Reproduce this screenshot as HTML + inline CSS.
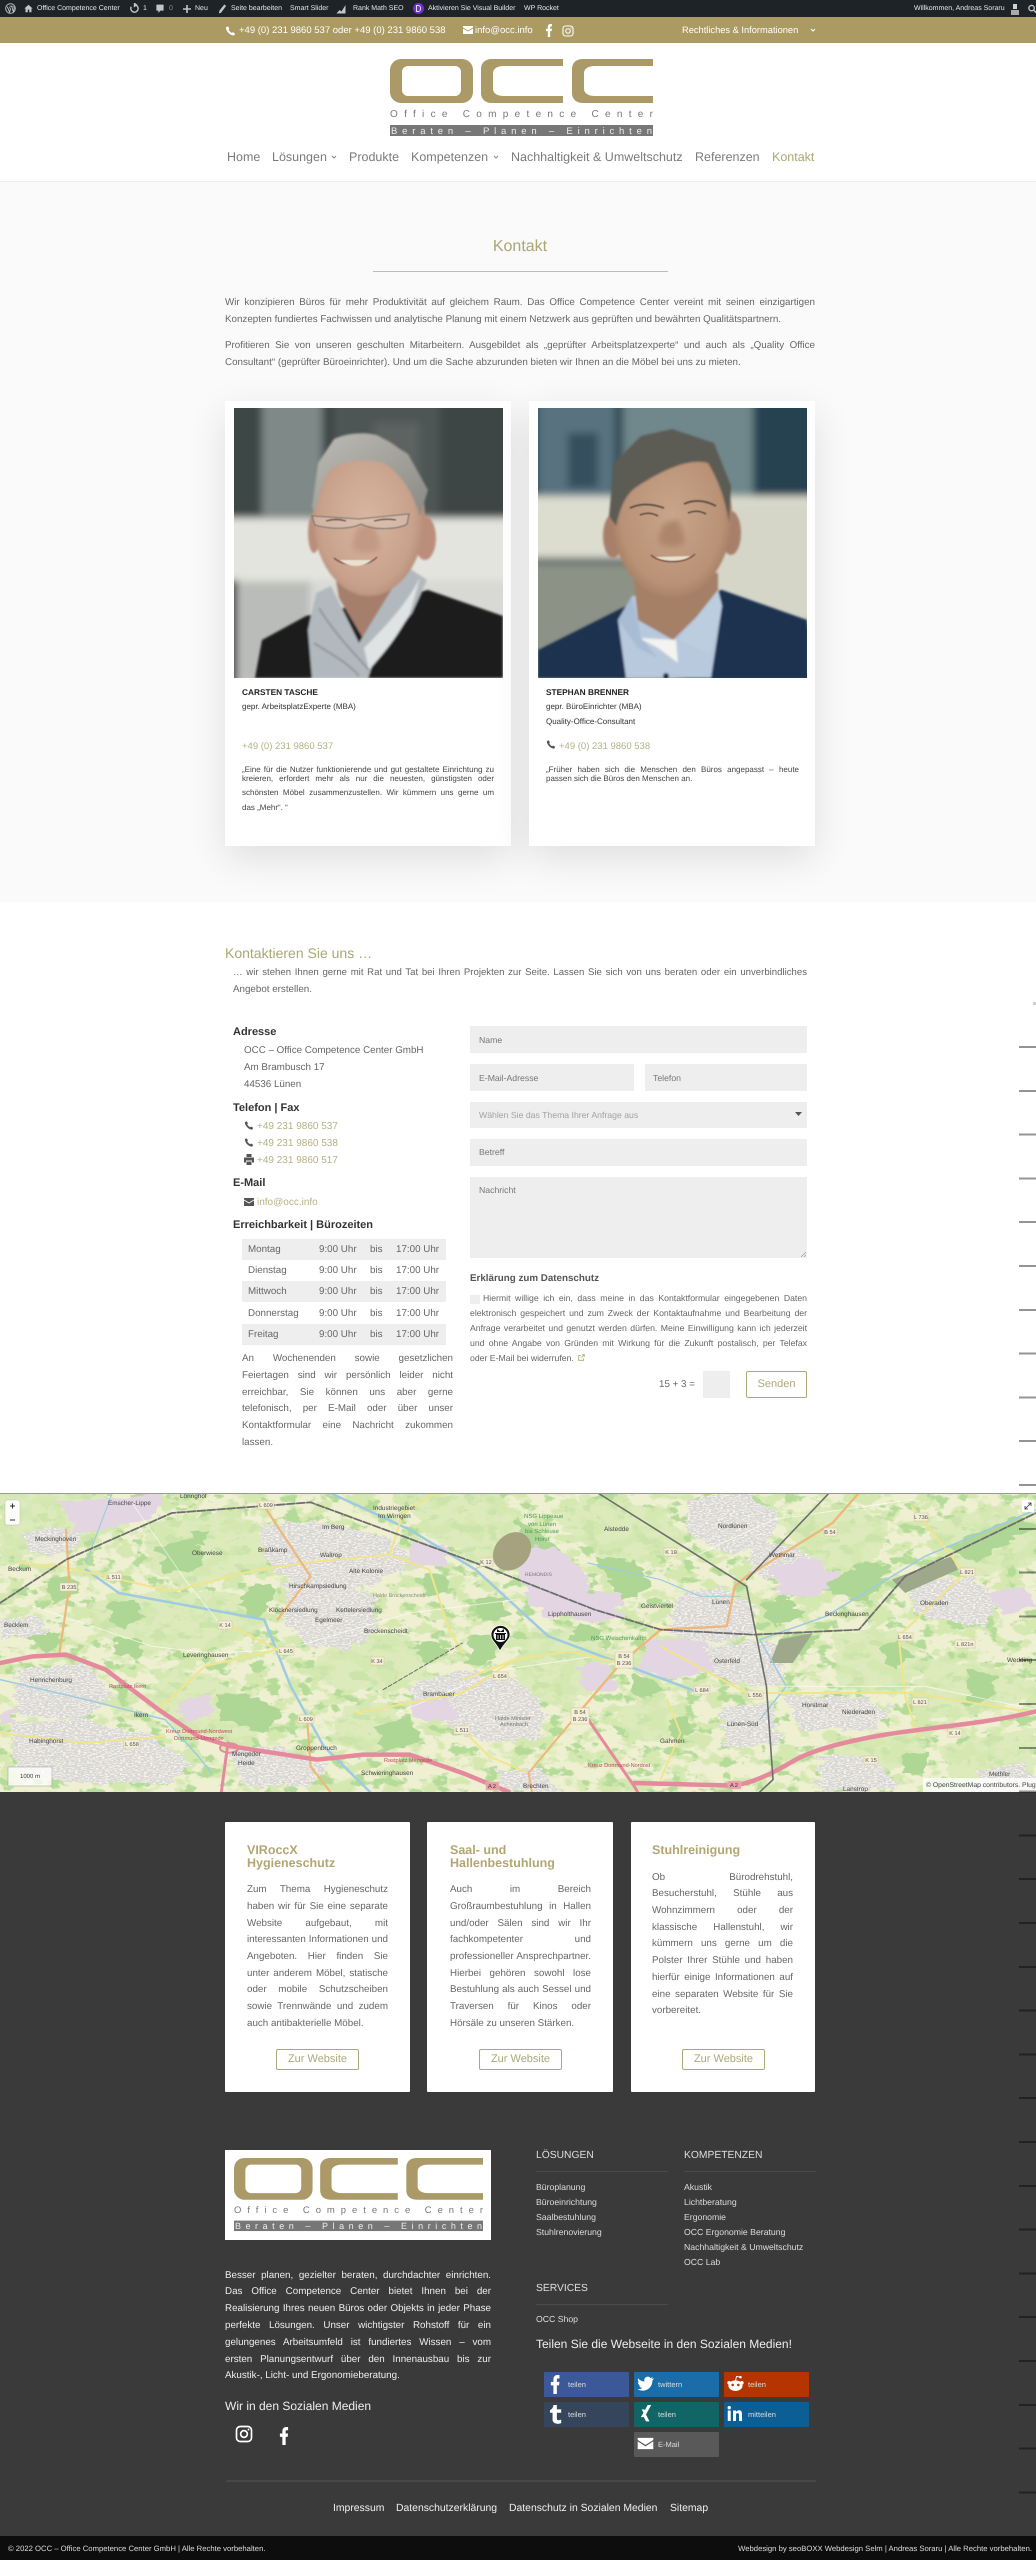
<!DOCTYPE html>
<html lang="de"><head><meta charset="utf-8"><title>Kontakt - OCC</title>
<style>
html,body{margin:0;padding:0}
body{position:relative;width:1036px;height:2560px;overflow:hidden;background:#fff;font-family:"Liberation Sans",Arial,sans-serif;color:#666;font-size:10px;text-rendering:geometricPrecision}
.a{position:absolute}
.t{position:absolute;white-space:nowrap;line-height:14px;margin-top:1px}
.j{position:absolute;line-height:14px;text-align:justify;text-align-last:justify;margin-top:1px}
svg{display:block}
svg.a{position:absolute}
.ad{color:#e8e8e8;font-size:7px;margin-top:0}
.gb{color:#fff;font-size:9.5px;margin-top:0}
.nav{font-size:12.5px;color:#7b7b7b;margin-top:0}
.f{background:#eee;position:absolute}
.ph{color:#777;font-size:8.7px;margin-top:0}
.g{color:#b3b285;margin-top:2px}
.h{font-weight:bold;color:#333;font-size:11px}
.p{color:#666;font-size:9.8px}
.q{color:#444;font-size:8px}
.ct{font-weight:bold;color:#b3a673;font-size:12.5px}
.btn{position:absolute;border:1px solid #aaa97c;border-radius:2px;color:#aaa97c;text-align:center;font-size:11px;box-sizing:border-box}
.card{position:absolute;background:#fff;top:1822px;height:270px;border-radius:1px}
.w{color:#eee;font-size:9.8px}
.fl{color:#ddd;font-size:8.7px}
.fh{color:#ddd;font-size:10.3px}
.ln{position:absolute;height:1px;background:#4b4b4b}
.s{position:absolute;height:25px;width:85px;border-radius:1px;color:#ddd;font-size:7.5px;line-height:25px}
.s span{position:absolute;left:24px;top:0}
.s svg{position:absolute;left:3px;top:3px}
.row{position:absolute;left:242px;width:204px;height:21px;background:#eee}
.ms{font-size:6.4px;fill:#444;font-family:"Liberation Sans",sans-serif}
.mg{font-size:6px;fill:#4a9a55;font-family:"Liberation Sans",sans-serif}
.mr{font-size:5.6px;fill:#b8505e;font-family:"Liberation Sans",sans-serif}
.mb{font-size:5.6px;fill:#555;font-family:"Liberation Sans",sans-serif;text-anchor:middle}
.bd{fill:#f6efd8;stroke:#d8c9a0;stroke-width:.6}
</style></head><body>

<!-- admin bar -->
<div class="a" style="left:0;top:0;width:1036px;height:17px;background:#1d2327"></div>
<svg class="a" style="left:5px;top:3px" width="11" height="11" viewBox="0 0 24 24"><circle cx="12" cy="12" r="10.500" fill="none" stroke="#c3c6c9" stroke-width="2"/><path d="M5 8l5 12 2-6-2-5M10 7h7M15 8l3 11 2-7c.5-2-1-3-1-5" fill="none" stroke="#c3c6c9" stroke-width="2"/></svg>
<svg class="a" style="left:24px;top:4px" width="9" height="9" viewBox="0 0 24 24"><path d="M12 2 1 12h3v10h6v-7h4v7h6V12h3z" fill="#c3c6c9"/></svg>
<div class="t ad" style="left:37px;top:2px">Office Competence Center</div>
<svg class="a" style="left:129px;top:3px" width="11" height="11" viewBox="0 0 24 24"><path d="M12 4a8 8 0 1 1-7 4M12 1v6l4-3z" fill="none" stroke="#c3c6c9" stroke-width="3"/></svg>
<div class="t ad" style="left:143px;top:2px">1</div>
<svg class="a" style="left:156px;top:4px" width="8" height="10" viewBox="0 0 20 24"><path d="M1 1h18v15h-8l-5 6v-6H1z" fill="#c3c6c9"/></svg>
<div class="t ad" style="left:169px;top:2px;color:#888">0</div>
<svg class="a" style="left:183px;top:5px" width="8" height="8" viewBox="0 0 10 10"><path d="M4 0h2v4h4v2H6v4H4V6H0V4h4z" fill="#c3c6c9"/></svg>
<div class="t ad" style="left:195px;top:2px">Neu</div>
<svg class="a" style="left:218px;top:4px" width="9" height="10" viewBox="0 0 20 22"><path d="M14 1l4 3L7 19l-5 2 1-6z" fill="#c3c6c9"/></svg>
<div class="t ad" style="left:231px;top:2px">Seite bearbeiten</div>
<div class="t ad" style="left:290px;top:2px">Smart Slider</div>
<svg class="a" style="left:336px;top:4px" width="11" height="10" viewBox="0 0 22 20"><path d="M1 19l6-7 4 3 8-13v17z" fill="#c3c6c9"/></svg>
<div class="t ad" style="left:353px;top:2px">Rank Math SEO</div>
<div class="a" style="left:413px;top:3px;width:11px;height:11px;border-radius:50%;background:#6f2fd0;border:0"></div>
<div class="a" style="left:416px;top:5px;width:3px;height:5px;border:1px solid #ddd;border-radius:0 3px 3px 0"></div>
<div class="t ad" style="left:428px;top:2px">Aktivieren Sie Visual Builder</div>
<div class="t ad" style="left:524px;top:2px">WP Rocket</div>
<div class="t ad" style="left:914px;top:2px">Willkommen, Andreas Soraru</div>
<svg class="a" style="left:1010px;top:4px" width="10" height="11" viewBox="0 0 10 11"><rect x="3" y="0" width="4" height="5" fill="#d0d0d0"/><rect x="1" y="6" width="8" height="5" fill="#aaa"/></svg>
<svg class="a" style="left:1028px;top:4px" width="9" height="10" viewBox="0 0 20 20"><circle cx="8" cy="8" r="6" fill="none" stroke="#c3c6c9" stroke-width="3"/><path d="M13 13l6 6" stroke="#c3c6c9" stroke-width="3"/></svg>

<!-- gold bar -->
<div class="a" style="left:0;top:17px;width:1036px;height:26px;background:#ab9a62"></div>
<svg class="a" style="left:225px;top:25px" width="11" height="12" viewBox="0 0 24 24"><path d="M6.600 2 9.500 7 7.800 9c.9 2.600 4.200 5.900 7.200 7.200l2-1.700 5 2.900-1.400 3.600c-.4.7-1 1-2 .9C10.500 20.800 3.200 13.500 2.100 5.400 2 4.400 2.300 3.800 3 3.400z" fill="#fff"/></svg>
<div class="t gb" style="left:239px;top:24px">+49 (0) 231 9860 537 oder +49 (0) 231 9860 538</div>
<svg class="a" style="left:463px;top:26px" width="10" height="8" viewBox="0 0 20 16"><path d="M0 0h20v3L10 9 0 3zM0 5l10 6 10-6v11H0z" fill="#fff"/></svg>
<div class="t gb" style="left:475px;top:24px">info@occ.info</div>
<svg class="a" style="left:546px;top:24px" width="6" height="13" viewBox="0 0 10 22"><path d="M3 22V12H0V8h3V5c0-3 2-5 4.500-5H10v4H8C7 4 7 5 7 6v2h3l-.5 4H7v10z" fill="#fff"/></svg>
<svg class="a" style="left:562px;top:25px" width="12" height="12" viewBox="0 0 24 24"><rect x="2" y="2" width="20" height="20" rx="5" fill="none" stroke="#fff" stroke-width="2.200"/><circle cx="12" cy="12" r="4.500" fill="none" stroke="#fff" stroke-width="2.200"/><circle cx="18" cy="6" r="1.300" fill="#fff"/></svg>
<div class="t gb" style="left:682px;top:23px;font-size:9.300px">Rechtliches &amp; Informationen</div>
<svg class="a" style="left:810px;top:28px" width="6" height="5" viewBox="0 0 6 5"><path d="M1 1l2 2 2-2" fill="none" stroke="#fff"/></svg>

<!-- logo -->
<svg class="a" style="left:390px;top:59px" width="263" height="78" viewBox="0 0 263 78">
<rect x="0" y="0" width="83" height="44" rx="11" fill="#ab9a68"/><rect x="12" y="7" width="59" height="30" rx="6" fill="#fff"/>
<path d="M102 0H173V7H114c-7 0-11 3-11 7v16c0 4 4 7 11 7H173V44H102c-7 0-11-4-11-10V10c0-6 4-10 11-10z" fill="#ab9a68"/>
<path d="M193 0H263V7H205c-7 0-11 3-11 7v16c0 4 4 7 11 7H263V44H193c-7 0-11-4-11-10V10c0-6 4-10 11-10z" fill="#ab9a68"/>
<text x="0" y="58" font-size="10" fill="#777" textLength="263" font-family="Liberation Sans">Office Competence Center</text>
<rect x="0" y="66" width="263" height="11" fill="#777"/>
<text x="1" y="75" font-size="9.500" fill="#eee" textLength="261" font-family="Liberation Sans">Beraten – Planen – Einrichten</text>
</svg>

<!-- nav -->
<div class="t nav" style="left:227px;top:150px">Home</div>
<div class="t nav" style="left:272px;top:150px">Lösungen</div>
<svg class="a" style="left:331px;top:155px" width="6" height="5" viewBox="0 0 6 5"><path d="M1 1l2 2 2-2" fill="none" stroke="#888"/></svg>
<div class="t nav" style="left:349px;top:150px">Produkte</div>
<div class="t nav" style="left:411px;top:150px">Kompetenzen</div>
<svg class="a" style="left:493px;top:155px" width="6" height="5" viewBox="0 0 6 5"><path d="M1 1l2 2 2-2" fill="none" stroke="#888"/></svg>
<div class="t nav" style="left:511px;top:150px">Nachhaltigkeit &amp; Umweltschutz</div>
<div class="t nav" style="left:695px;top:150px">Referenzen</div>
<div class="t nav" style="left:772px;top:150px;color:#a9a875">Kontakt</div>

<!-- section 1 -->
<div class="a" style="left:0;top:181px;width:1036px;height:721px;background:#fafafa;border-top:1px solid #eee;box-sizing:border-box"></div>
<div class="t" style="left:420px;width:200px;text-align:center;top:238px;font-size:16px;line-height:16px;color:#a9a875">Kontakt</div>
<div class="a" style="left:373px;top:271px;width:295px;height:1px;background:#bbb"></div>
<div class="j p" style="left:225px;top:295px;width:590px">Wir konzipieren Büros für mehr Produktivität auf gleichem Raum. Das Office Competence Center vereint mit seinen einzigartigen</div>
<div class="t p" style="left:225px;top:312px">Konzepten fundiertes Fachwissen und analytische Planung mit einem Netzwerk aus geprüften und bewährten Qualitätspartnern.</div>
<div class="j p" style="left:225px;top:338px;width:590px">Profitieren Sie von unseren geschulten Mitarbeitern. Ausgebildet als „geprüfter Arbeitsplatzexperte“ und auch als „Quality Office</div>
<div class="t p" style="left:225px;top:355px">Consultant“ (geprüfter Büroeinrichter). Und um die Sache abzurunden bieten wir Ihnen an die Möbel bei uns zu mieten.</div>

<!-- team cards -->
<div class="a" style="left:225px;top:401px;width:286px;height:445px;background:#fff;box-shadow:0 12px 36px rgba(0,0,0,.11)"></div>
<div class="a" style="left:529px;top:401px;width:286px;height:445px;background:#fff;box-shadow:0 12px 36px rgba(0,0,0,.11)"></div>

<svg class="a" style="left:234px;top:408px" width="269" height="270" viewBox="0 0 269 270">
<defs><filter id="b1" x="-10%" y="-10%" width="120%" height="120%"><feGaussianBlur stdDeviation="4"/></filter><filter id="b2" x="-10%" y="-10%" width="120%" height="120%"><feGaussianBlur stdDeviation="1"/></filter><filter id="b3" x="-30%" y="-30%" width="160%" height="160%"><feGaussianBlur stdDeviation="3"/></filter><filter id="b4" x="-20%" y="-60%" width="140%" height="220%"><feGaussianBlur stdDeviation=".6"/></filter>
<clipPath id="cp1"><rect width="269" height="270"/></clipPath>
<radialGradient id="sk1" cx=".48" cy=".52" r=".6"><stop offset="0" stop-color="#d8b6a0"/><stop offset=".7" stop-color="#c8a18b"/><stop offset="1" stop-color="#a67f6c"/></radialGradient>
<radialGradient id="sk2" cx=".5" cy=".5" r=".6"><stop offset="0" stop-color="#c9a58a"/><stop offset=".7" stop-color="#b99276"/><stop offset="1" stop-color="#946e57"/></radialGradient>
<linearGradient id="hr1" x1="0" y1="0" x2="1" y2="1"><stop offset="0" stop-color="#bcbbb4"/><stop offset="1" stop-color="#8a8983"/></linearGradient>
</defs>
<g clip-path="url(#cp1)">
<g filter="url(#b1)">
<rect x="-10" y="-10" width="290" height="290" fill="#3e4644"/>
<rect x="28" y="-10" width="60" height="118" fill="#7f8a88"/>
<rect x="100" y="-10" width="105" height="118" fill="#4d5654"/>
<rect x="140" y="15" width="45" height="80" fill="#5c6460"/>
<rect x="215" y="-10" width="60" height="118" fill="#3d4544"/>
<rect x="-10" y="110" width="290" height="62" fill="#e4e4df"/>
<rect x="-10" y="172" width="290" height="110" fill="#d8d9d5"/>
<rect x="6" y="174" width="70" height="100" fill="#b9bcb8"/>
<rect x="-10" y="172" width="14" height="110" fill="#3a3a3a"/>
</g>
<g filter="url(#b2)">
<polygon points="21,270 28,232 72,208 194,182 269,208 269,270" fill="#1c1c1e"/>
<polygon points="100,160 172,160 172,180 130,232 105,190" fill="#a67f6c"/>
<polygon points="74,222 82,185 97,178 125,235 172,158 193,172 178,205 139,255 134,270 78,270" fill="#b2b9be"/>
<path d="M130 240 C150 220 170 200 186 170 L176 205 C160 235 145 250 135 262Z" fill="#dfe3e4"/>
<path d="M85 200 C100 225 120 245 135 262 M80 235 C95 245 115 255 125 268" stroke="#8e959a" stroke-width="2" fill="none"/>
<ellipse cx="191" cy="130" rx="11" ry="22" fill="#bb8e7c"/>
<ellipse cx="80" cy="125" rx="6" ry="20" fill="#bb8e7c"/>
<ellipse cx="135" cy="108" rx="56" ry="80" fill="url(#sk1)"/>
<path d="M78 100 L84 55 L100 31 C115 24 135 24 145 28 L174 46 L194 82 L186 108 C180 90 172 70 150 55 C130 50 105 52 95 64 C88 75 84 90 82 103Z" fill="url(#hr1)"/>
</g>
<g filter="url(#b3)">
<path d="M124 118 C120 128 116 138 120 142 C128 146 140 146 146 141 C148 136 143 126 140 116Z" fill="#c29a84"/>
</g>
<g filter="url(#b4)">
<path d="M78 108 L125 111 L175 106 L173 116 C165 121 140 123 127 116 C115 122 95 121 81 117Z" fill="#e0cdbf" fill-opacity=".45" stroke="#76716e" stroke-width="1.100"/>
<path d="M92 113 q10 -3 20 0 M140 113 q12 -3 22 -1" stroke="#5a4840" stroke-width="1.400" fill="none"/>
<path d="M100 150 C110 159 133 160 143 149" stroke="#7a4a3e" stroke-width="1.300" fill="none"/>
<path d="M106 152 C115 160 129 160 137 152Z" fill="#e9e1cf"/>
</g></g></svg>

<svg class="a" style="left:538px;top:408px" width="269" height="270" viewBox="0 0 269 270">
<g clip-path="url(#cp1)">
<g filter="url(#b1)">
<rect x="-10" y="-10" width="290" height="290" fill="#2a4250"/>
<rect x="0" y="-10" width="77" height="100" fill="#587280"/>
<rect x="30" y="25" width="30" height="55" fill="#34505e"/>
<rect x="85" y="-10" width="130" height="100" fill="#6f878c"/>
<rect x="215" y="-10" width="60" height="104" fill="#264251"/>
<rect x="-10" y="88" width="290" height="62" fill="#dcdccf"/>
<rect x="130" y="95" width="150" height="120" fill="#d5d6c8"/>
<rect x="-10" y="155" width="150" height="120" fill="#8d9286"/>
</g>
<g filter="url(#b2)">
<polygon points="0,242 88,198 184,182 269,212 269,270 0,270" fill="#1b3350"/>
<polygon points="80,212 94,188 180,182 184,198 173,270 88,270" fill="#b8c9dd"/>
<polygon points="95,165 180,165 180,188 135,232 100,212" fill="#a57f66"/>
<polygon points="101,230 138,232 140,255 120,240" fill="#f3f3f0"/>
<path d="M80 212 L94 188 L103 230 L120 250 L100 240Z" fill="#a8bcd4"/>
<path d="M180 182 L184 198 L172 245 L140 232Z" fill="#bccde0"/>
<circle cx="128" cy="268" r="3" fill="#1b2b40"/>
<ellipse cx="75" cy="128" rx="10" ry="22" fill="#a8806a"/>
<ellipse cx="193" cy="125" rx="10" ry="22" fill="#a8806a"/>
<ellipse cx="134" cy="108" rx="60" ry="82" fill="url(#sk2)"/>
<path d="M71 108 L76 55 L103 28 L134 21 L176 35 L193 78 L191 115 C188 95 182 75 170 55 C150 50 125 62 100 78 C88 85 82 100 78 118Z" fill="#5c5c55"/>
</g>
<g filter="url(#b3)">
<path d="M126 115 C122 125 118 132 122 136 C130 140 142 140 146 135 C148 130 144 122 140 112Z" fill="#ad866b"/>
</g>
<g filter="url(#b4)">
<path d="M92 100 q15 -7 34 0 M146 96 q15 -7 32 2" stroke="#5e5044" stroke-width="1.800" fill="none"/>
<path d="M102 107 q9 -4 18 1 M150 105 q9 -4 18 1" stroke="#4a3c32" stroke-width="1.300" fill="none"/>
<path d="M113 147 C122 156 148 156 157 146" stroke="#744a3a" stroke-width="1.300" fill="none"/>
<path d="M118 149 C126 154 146 154 152 148Z" fill="#e8e0ce"/>
</g></g></svg>

<div class="t" style="left:242px;top:684px;font-weight:bold;font-size:8.300px;color:#222">CARSTEN TASCHE</div>
<div class="t q" style="left:242px;top:699px;color:#333">gepr. ArbeitsplatzExperte (MBA)</div>
<div class="t g" style="left:242px;top:738px;font-size:9.500px">+49 (0) 231 9860 537</div>
<div class="j q" style="left:242px;top:762px;width:252px">„Eine für die Nutzer funktionierende und gut gestaltete Einrichtung zu</div>
<div class="j q" style="left:242px;top:771px;width:252px">kreieren, erfordert mehr als nur die neuesten, günstigsten oder</div>
<div class="j q" style="left:242px;top:785px;width:252px">schönsten Möbel zusammenzustellen. Wir kümmern uns gerne um</div>
<div class="t q" style="left:242px;top:800px">das „Mehr“. “</div>

<div class="t" style="left:546px;top:684px;font-weight:bold;font-size:8.300px;color:#222">STEPHAN BRENNER</div>
<div class="t q" style="left:546px;top:699px;color:#333">gepr. BüroEinrichter (MBA)</div>
<div class="t q" style="left:546px;top:714px;color:#333">Quality-Office-Consultant</div>
<svg class="a" style="left:546px;top:739px" width="10" height="11" viewBox="0 0 24 24"><path d="M6.600 2 9.500 7 7.800 9c.9 2.600 4.200 5.900 7.200 7.200l2-1.700 5 2.900-1.400 3.600c-.4.7-1 1-2 .9C10.500 20.800 3.200 13.500 2.100 5.400 2 4.400 2.300 3.800 3 3.400z" fill="#555"/></svg>
<div class="t g" style="left:559px;top:738px;font-size:9.500px">+49 (0) 231 9860 538</div>
<div class="j q" style="left:546px;top:762px;width:253px">„Früher haben sich die Menschen den Büros angepasst – heute</div>
<div class="t q" style="left:546px;top:771px">passen sich die Büros den Menschen an.</div>

<!-- contact -->
<div class="t" style="left:225px;top:945px;font-size:14px;color:#a9a875">Kontaktieren Sie uns …</div>
<div class="j p" style="left:233px;top:965px;width:574px;font-size:9.600px">… wir stehen Ihnen gerne mit Rat und Tat bei Ihren Projekten zur Seite. Lassen Sie sich von uns beraten oder ein unverbindliches</div>
<div class="t p" style="left:233px;top:982px">Angebot erstellen.</div>

<div class="t h" style="left:233px;top:1024px">Adresse</div>
<div class="t p" style="left:244px;top:1043px">OCC – Office Competence Center GmbH</div>
<div class="t p" style="left:244px;top:1060px">Am Brambusch 17</div>
<div class="t p" style="left:244px;top:1077px">44536 Lünen</div>
<div class="t h" style="left:233px;top:1100px">Telefon | Fax</div>
<svg class="a" style="left:244px;top:1120px" width="10" height="11" viewBox="0 0 24 24"><path d="M6.600 2 9.500 7 7.800 9c.9 2.600 4.200 5.900 7.200 7.200l2-1.700 5 2.900-1.400 3.600c-.4.7-1 1-2 .9C10.500 20.800 3.200 13.500 2.100 5.400 2 4.400 2.300 3.800 3 3.400z" fill="#555"/></svg>
<div class="t g" style="left:257px;top:1118px">+49 231 9860 537</div>
<svg class="a" style="left:244px;top:1137px" width="10" height="11" viewBox="0 0 24 24"><path d="M6.600 2 9.500 7 7.800 9c.9 2.600 4.200 5.900 7.200 7.200l2-1.700 5 2.900-1.400 3.600c-.4.7-1 1-2 .9C10.500 20.800 3.200 13.500 2.100 5.400 2 4.400 2.300 3.800 3 3.400z" fill="#555"/></svg>
<div class="t g" style="left:257px;top:1135px">+49 231 9860 538</div>
<svg class="a" style="left:244px;top:1154px" width="10" height="11" viewBox="0 0 20 22"><path d="M5 0h10v6H5zM0 7h20v10h-4v-4H4v4H0zM5 15h10v7H5z" fill="#555"/></svg>
<div class="t g" style="left:257px;top:1152px">+49 231 9860 517</div>
<div class="t h" style="left:233px;top:1175px">E-Mail</div>
<svg class="a" style="left:244px;top:1198px" width="10" height="8" viewBox="0 0 20 16"><path d="M0 0h20v3L10 9 0 3zM0 5l10 6 10-6v11H0z" fill="#555"/></svg>
<div class="t g" style="left:257px;top:1194px">info@occ.info</div>
<div class="t h" style="left:233px;top:1217px">Erreichbarkeit | Bürozeiten</div>

<div class="row" style="top:1239px"></div><div class="row" style="top:1281px"></div><div class="row" style="top:1324px"></div>
<div class="t p" style="left:248px;top:1242px">Montag</div><div class="t p" style="left:319px;top:1242px">9:00 Uhr</div><div class="t p" style="left:370px;top:1242px">bis</div><div class="t p" style="left:396px;top:1242px">17:00 Uhr</div>
<div class="t p" style="left:248px;top:1263px">Dienstag</div><div class="t p" style="left:319px;top:1263px">9:00 Uhr</div><div class="t p" style="left:370px;top:1263px">bis</div><div class="t p" style="left:396px;top:1263px">17:00 Uhr</div>
<div class="t p" style="left:248px;top:1284px">Mittwoch</div><div class="t p" style="left:319px;top:1284px">9:00 Uhr</div><div class="t p" style="left:370px;top:1284px">bis</div><div class="t p" style="left:396px;top:1284px">17:00 Uhr</div>
<div class="t p" style="left:248px;top:1306px">Donnerstag</div><div class="t p" style="left:319px;top:1306px">9:00 Uhr</div><div class="t p" style="left:370px;top:1306px">bis</div><div class="t p" style="left:396px;top:1306px">17:00 Uhr</div>
<div class="t p" style="left:248px;top:1327px">Freitag</div><div class="t p" style="left:319px;top:1327px">9:00 Uhr</div><div class="t p" style="left:370px;top:1327px">bis</div><div class="t p" style="left:396px;top:1327px">17:00 Uhr</div>

<div class="j p" style="left:242px;top:1351px;width:211px">An Wochenenden sowie gesetzlichen</div>
<div class="j p" style="left:242px;top:1368px;width:211px">Feiertagen sind wir persönlich leider nicht</div>
<div class="j p" style="left:242px;top:1385px;width:211px">erreichbar, Sie können uns aber gerne</div>
<div class="j p" style="left:242px;top:1401px;width:211px">telefonisch, per E-Mail oder über unser</div>
<div class="j p" style="left:242px;top:1418px;width:211px">Kontaktformular eine Nachricht zukommen</div>
<div class="t p" style="left:242px;top:1435px">lassen.</div>

<div class="f" style="left:470px;top:1026px;width:337px;height:27px"></div>
<div class="t ph" style="left:479px;top:1033px">Name</div>
<div class="f" style="left:470px;top:1064px;width:164px;height:27px"></div>
<div class="t ph" style="left:479px;top:1071px">E-Mail-Adresse</div>
<div class="f" style="left:645px;top:1064px;width:162px;height:27px"></div>
<div class="t ph" style="left:653px;top:1071px">Telefon</div>
<div class="f" style="left:470px;top:1102px;width:337px;height:26px"></div>
<div class="t ph" style="left:479px;top:1108px;color:#a2a2a2">Wählen Sie das Thema Ihrer Anfrage aus</div>
<svg class="a" style="left:795px;top:1112px" width="7" height="5" viewBox="0 0 7 5"><path d="M0 0h7L3.500 4z" fill="#555"/></svg>
<div class="f" style="left:470px;top:1139px;width:337px;height:27px"></div>
<div class="t ph" style="left:479px;top:1145px">Betreff</div>
<div class="f" style="left:470px;top:1177px;width:337px;height:81px"></div>
<div class="t ph" style="left:479px;top:1183px">Nachricht</div>
<svg class="a" style="left:801px;top:1252px" width="5" height="5" viewBox="0 0 5 5"><path d="M0 5l5-5M3 5l2-2" stroke="#999" stroke-width=".7"/></svg>

<div class="t" style="left:470px;top:1271px;font-weight:bold;font-size:9.800px;color:#555">Erklärung zum Datenschutz</div>
<div class="f" style="left:470px;top:1295px;width:10px;height:9px"></div>
<div class="j ph" style="left:483px;top:1291px;width:324px;color:#666">Hiermit willige ich ein, dass meine in das Kontaktformular eingegebenen Daten</div>
<div class="j ph" style="left:470px;top:1306px;width:337px;color:#666">elektronisch gespeichert und zum Zweck der Kontaktaufnahme und Bearbeitung der</div>
<div class="j ph" style="left:470px;top:1321px;width:337px;color:#666">Anfrage verarbeitet und genutzt werden dürfen. Meine Einwilligung kann ich jederzeit</div>
<div class="j ph" style="left:470px;top:1336px;width:337px;color:#666">und ohne Angabe von Gründen mit Wirkung für die Zukunft postalisch, per Telefax</div>
<div class="t ph" style="left:470px;top:1351px;color:#666">oder E-Mail bei widerrufen.</div>
<svg class="a" style="left:578px;top:1354px" width="7" height="7" viewBox="0 0 10 10"><path d="M4 2H1v7h7V6M5 5l4-4M6 1h3v3" fill="none" stroke="#a9a875" stroke-width="1.200"/></svg>
<div class="t p" style="left:659px;top:1377px">15 + 3 =</div>
<div class="f" style="left:703px;top:1371px;width:27px;height:27px"></div>
<div class="btn" style="left:746px;top:1371px;width:61px;height:27px;line-height:25px">Senden</div>

<div class="a" style="left:1033px;top:1002px;width:3px;height:3px;background:#ccc"></div>

<!-- map -->
<svg class="a" style="left:0;top:1493px" width="1036" height="299" viewBox="0 0 1036 299">
<defs>
<filter id="mf" x="0" y="0" width="100%" height="100%" color-interpolation-filters="sRGB"><feTurbulence type="fractalNoise" baseFrequency=".045 .07" numOctaves="4" seed="7"/><feColorMatrix type="matrix" values="0 0 0 0 .83  0 0 0 0 .91  0 0 0 0 .69  9 0 0 0 -4.350"/></filter>
<filter id="mg" x="0" y="0" width="100%" height="100%" color-interpolation-filters="sRGB"><feTurbulence type="fractalNoise" baseFrequency=".06 .095" numOctaves="4" seed="23"/><feColorMatrix type="matrix" values="0 0 0 0 .71  0 0 0 0 .86  0 0 0 0 .60  10 0 0 0 -5.800"/></filter>
<filter id="dp" x="-5%" y="-5%" width="110%" height="110%"><feTurbulence type="fractalNoise" baseFrequency=".05" numOctaves="2" seed="3"/><feDisplacementMap in="SourceGraphic" scale="28" xChannelSelector="R" yChannelSelector="G"/></filter>
<filter id="st" x="-5%" y="-5%" width="110%" height="110%" color-interpolation-filters="sRGB"><feTurbulence type="fractalNoise" baseFrequency=".05" numOctaves="2" seed="9" result="a"/><feDisplacementMap in="SourceGraphic" in2="a" scale="34" xChannelSelector="R" yChannelSelector="G" result="d"/><feTurbulence type="fractalNoise" baseFrequency=".22 .3" numOctaves="2" seed="5"/><feColorMatrix type="matrix" values="0 0 0 0 .96  0 0 0 0 .95  0 0 0 0 .93  10 0 0 0 -5"/><feComposite in2="d" operator="in" result="sp"/><feMerge><feMergeNode in="d"/><feMergeNode in="sp"/></feMerge></filter>
</defs>
<rect width="1036" height="299" fill="#eff0d2"/>
<rect width="1036" height="299" filter="url(#mf)"/>
<rect width="1036" height="299" filter="url(#mg)"/>
<g transform="scale(0.6607 0.3333) translate(0 -40)">
<g fill="#d6e9b4" filter="url(#dp)" opacity=".7">
<path d="M0 40h160l40 100-100 60-100 40zM220 130l120-30 60 40 10 110-120 80-70-60zM620 40h140l30 130-60 80-90-90zM880 50l130 40 30 120-110 50-90-130zM1180 120l90-50 80 60-30 130-90 20zM1400 130l120-60 48 60v120l-90 40-60-60zM130 370l100-30 120-10 60 100-60 70-130 20-70-60zM520 450l100 20 40 130-130 40-70-60zM800 450l110 10 20 130-70 90-90-50zM1260 460l100-10 40 100-40 100-90-20zM1400 540l100 10 68 60v40l-130 80-60-60zM1000 640l40 90-40 60-50-20-20-80zM250 570l70 20 80 100-20 100-100-30-60-90zM520 680l70-20 30 100-50 60-70-30zM1270 780l110-30 30 70-90 80-60-60zM1420 800l148-60v190h-120z"/>
</g>
<g fill="#aed694" filter="url(#dp)">
<path d="M240 200l50-25 20 40-10 55-50 10zM70 300l40-20 10 60-40 30zM160 380l40-20 20 50-40 40zM385 310l30 10-10 70-25 30-15-50zM510 430l28 8-4 30-25-5zM640 290l30-10 10 50-35 20zM620 500l40-20 20 30-30 50zM710 480l30-20 20 30-20 60-30 10zM870 430l40 20-10 40-40-10zM960 580l40 30-10 40-40-10zM1150 370l40-20 30 60-50 30zM1180 470l60-10-30 70-30 10zM1330 500l30-20 20 50-30 40zM1470 570l40 20-10 70-40 20zM1100 680l25-10 10 40-30 30zM1010 720l30-10 10 50-30 20zM330 640l50 10 50 50-30 60-70-40zM40 470l30-20 30 30-30 40zM180 470l40 10-10 50-40-10zM110 720l30 10 10 60-40-20zM570 740l50-30 20 70-60 40zM780 110l30 40 40 60-60 0zM900 230l60 10 30 80-50 40zM1240 330l60-80 50 10-40 110zM1430 200l110-90 28 30-90 110zM720 360l40-10 10 60-40 20zM290 160l20-10 0 40-20 10zM1230 660l50-20 10 40-50 30zM1370 820l40 0-10 60-30 0z"/>
</g>
<g fill="#d9d7d3" filter="url(#st)">
<path d="M390 130l110 0 100 50 20 70-60 70-90 10-60-60zM430 310l70-20 70 60 0 100-40 60-60-10-40-70zM630 610l70-40 90 30 40 110-20 70-70 10-60-50-20-60-40-30zM1040 60l80-20 60 60-20 100-60 20-60-60zM1030 340l60-20 50 50 0 100-60 20-70-30zM1060 500l110-20 20 130-50 10-70-40zM1090 680l80-10 10 120-80 20zM1190 650l110 0 50 40-30 60-110 0zM1130 210l60-20 40 40-30 70-50 0zM1370 310l100-20 50 80-40 70-90-30zM20 570l110-20 40 110-50 60-90-10zM20 730l100-10 100 40 70 90-30 60-160 0-80-40zM340 810l80-10 70 60-20 60-100 0zM750 870l70 0 30 67-90 0zM40 150l60-10 30 50-50 40-40-20zM0 420l60-10 10 50-70 20zM1240 830l80 0 40 100h-120zM1480 870l70-20 18 60v30h-100z"/>
</g>
<g fill="#e3d6e2" filter="url(#dp)">
<path d="M780 210l60-10 50 90 0 50 60 70-60 20-90-60zM820 340l120 0 0 70-120 0zM980 480l80 0 20 90-70 30-50-30zM1170 260l60-30 40 60-30 60-60 0zM90 70l160-30-20 80-110 40zM620 190l50 0 10 70-60 0zM880 550l40 0 10 80-50 0zM270 670l50-30 0 60-40 30zM620 660l60 0 10 60-60 0zM1500 340l50-20 18 60-50 30zM0 700l20-20 0 50-20 10z"/>
</g>
<g fill="#a6a27f"><ellipse cx="775" cy="215" rx="28" ry="58" transform="rotate(8 775 215)"/></g>
<g fill="#9ea88a"><path d="M1180 480l50-20-30 90-35 0zM1350 300l90-70 10 40-80 70z"/></g>
<g fill="none" stroke-linecap="round" stroke-linejoin="round">
<g stroke="#9fcbe2">
<path vector-effect="non-scaling-stroke" stroke-width="2.500" d="M500 40 L620 150 L720 270 L830 470 L1060 640"/>
<path vector-effect="non-scaling-stroke" stroke-width="2.500" d="M130 270 L180 340 L400 420 L440 620 L490 800 L560 937"/>
<path vector-effect="non-scaling-stroke" stroke-width="1.500" d="M1568 90 L1400 230 L1250 410 L1150 480 L1190 620 L1150 720"/>
<path vector-effect="non-scaling-stroke" stroke-width="1.500" d="M0 600 L130 660 L250 720 L300 830 L320 880"/>
<path vector-effect="non-scaling-stroke" stroke-width="1.200" d="M890 250 L1000 300 L1060 350 L1120 350"/>
<path vector-effect="non-scaling-stroke" stroke-width="1.200" d="M170 40 L130 250"/>
</g>
<g stroke="#fff" stroke-opacity=".7">
<path vector-effect="non-scaling-stroke" stroke-width=".8" d="M50 380 L230 500 L320 520 L430 510 L620 400 L780 360 M600 700 L760 570 L900 530 M1180 620 L1400 620 L1568 690 M200 70 L280 300 L340 450 M1040 240 L1170 120 L1380 60"/>
</g>
<g stroke="#f0e48c">
<path vector-effect="non-scaling-stroke" stroke-width="2" d="M90 260 L160 290 L260 335 L390 270 L480 245 L590 225 L650 270 L680 450 L700 520"/>
<path vector-effect="non-scaling-stroke" stroke-width="2" d="M30 250 L90 260 M590 225 L610 100 L660 40"/>
<path vector-effect="non-scaling-stroke" stroke-width="2" d="M700 600 L780 540 L860 515 L940 550 M1000 500 L1130 640 L1380 640 L1568 700"/>
<path vector-effect="non-scaling-stroke" stroke-width="2" d="M340 430 L420 510 L310 560 L240 690 M540 700 L700 640 L780 540"/>
<path vector-effect="non-scaling-stroke" stroke-width="2" d="M1380 80 L1460 280 L1360 470 L1370 650 L1390 770"/>
<path vector-effect="non-scaling-stroke" stroke-width="1.800" d="M0 760 L130 790 L250 770 M700 750 L740 830 L800 880 M1010 660 L1030 760 L1000 900"/>
</g>
<g stroke="#eeb87b">
<path vector-effect="non-scaling-stroke" stroke-width="2.400" d="M880 690 L940 550 L1000 450 L1100 440 L1112 320 L1130 290 L1260 130 L1300 40"/>
<path vector-effect="non-scaling-stroke" stroke-width="2.200" d="M100 150 L105 320 L90 520"/>
<path vector-effect="non-scaling-stroke" stroke-width="2.200" d="M400 80 L470 290 L420 420 M465 720 L470 860 L500 937"/>
<path vector-effect="non-scaling-stroke" stroke-width="2" d="M880 690 L800 880 L805 937"/>
</g>
<g stroke="#e58a9c">
<path vector-effect="non-scaling-stroke" stroke-width="4.500" d="M1568 695 C1500 730 1400 745 1340 765 C1280 785 1230 810 1200 845 C1170 880 1140 910 1110 918 L960 910"/>
<path vector-effect="non-scaling-stroke" stroke-width="4.500" d="M770 937 L700 880 L620 825 L550 825 L480 840 L350 800 L300 770 L240 690 L160 570 L100 525 L50 530 L0 550"/>
<path vector-effect="non-scaling-stroke" stroke-width="3" d="M880 690 L960 920 L965 937"/>
<path vector-effect="non-scaling-stroke" stroke-width="3" d="M345 790 L335 937"/>
<circle vector-effect="non-scaling-stroke" cx="347" cy="805" r="14" stroke-width="2"/>
</g>
<g stroke="#6e6e6e">
<path vector-effect="non-scaling-stroke" stroke-width="1.800" stroke-dasharray="8 2" d="M0 370 L100 240 L260 100 L470 68 L720 250 L900 390 L1000 450 L1140 465 L1300 450 L1370 290 L1568 100"/>
<path vector-effect="non-scaling-stroke" stroke-width="1.600" d="M905 40 L1130 320 L1160 620 L1170 900 L1150 937 M1255 40 L1130 300"/>
<path vector-effect="non-scaling-stroke" stroke-width="1" stroke-dasharray="4 2" d="M580 630 L700 490"/>
</g>
</g>
</g>
<g>
<text class="ms" x="180" y="5">Löringhof</text><text class="ms" x="108" y="12">Emscher-Lippe</text><text class="ms" x="373" y="17">Industriegebiet</text><text class="ms" x="378" y="25">Im Wirrigen</text>
<text class="mg" x="524" y="25">NSG Lippeaue</text><text class="mg" x="528" y="33">von Lünen</text><text class="mg" x="525" y="40">bis Schleuse</text><text class="mg" x="535" y="48">Horst</text>
<text class="ms" x="604" y="38">Alstedde</text><text class="ms" x="718" y="35">Nordlünen</text><text class="ms" x="35" y="48">Meckinghoven</text><text class="ms" x="322" y="36">Im Berg</text>
<text class="ms" x="192" y="62">Oberwiese</text><text class="ms" x="258" y="59">Braßkamp</text><text class="ms" x="320" y="64">Waltrop</text><text class="ms" x="769" y="64">Wethmar</text>
<text class="ms" x="349" y="80">Alte Kolonie</text><text class="ms" x="8" y="78">Beckum</text><text class="mg" x="525" y="83" style="fill:#777;font-size:5px">REMONDIS</text>
<text class="ms" x="289" y="95">Hirschkampsiedlung</text><text class="mg" x="373" y="104" style="font-size:5.400px;fill:#888">Halde Brockenscheidt</text>
<text class="ms" x="269" y="119">Klöcknersiedlung</text><text class="ms" x="336" y="119">Kettelersiedlung</text><text class="ms" x="315" y="129">Egelmeer</text>
<text class="ms" x="548" y="123">Lippholthausen</text><text class="ms" x="641" y="115">Geistviertel</text><text class="ms" x="712" y="111">Lünen</text><text class="ms" x="920" y="112">Oberaden</text><text class="ms" x="825" y="123">Beckinghausen</text>
<text class="ms" x="4" y="134">Becklem</text><text class="ms" x="364" y="140">Brockenscheidt</text><text class="mg" x="591" y="147">NSG Weischenkamp</text>
<text class="ms" x="183" y="164">Leveringhausen</text><text class="ms" x="714" y="170">Osterfeld</text><text class="ms" x="1007" y="169">Wedding</text>
<text class="ms" x="30" y="189">Henrichenburg</text><text class="mr" x="109" y="195">Rastplatz Ikern</text><text class="ms" x="423" y="203">Brambauer</text>
<text class="ms" x="802" y="214">Horstmar</text><text class="ms" x="842" y="221">Niederaden</text><text class="ms" x="495" y="227" style="font-size:5.600px;fill:#777">Halde Minister</text><text class="ms" x="500" y="233" style="font-size:5.600px;fill:#777">Achenbach</text>
<text class="ms" x="134" y="224">Ikern</text><text class="ms" x="727" y="233">Lünen-Süd</text><text class="ms" x="660" y="250">Gahmen</text><text class="ms" x="29" y="250">Habinghorst</text>
<text class="mr" x="166" y="240">Kreuz Dortmund-Nordwest</text><text class="mr" x="174" y="247">Dortmund-Mengede</text><text class="ms" x="296" y="257">Groppenbruch</text>
<text class="ms" x="232" y="263">Mengeder</text><text class="ms" x="238" y="272">Heide</text><text class="mr" x="384" y="269">Rastplatz Mengede</text><text class="mr" x="588" y="274">Kreuz Dortmund-Nordost</text>
<text class="ms" x="361" y="282">Schwieringhausen</text><text class="ms" x="989" y="283">Methler</text><text class="ms" x="523" y="295">Brechten</text><text class="ms" x="843" y="298">Lanstrop</text>
<rect class="bd" x="258" y="8" width="16" height="8"/><text class="mb" x="266" y="14">L 609</text>
<rect class="bd" x="914" y="20" width="14" height="8"/><text class="mb" x="921" y="26">L 736</text>
<rect class="bd" x="824" y="35" width="13" height="8"/><text class="mb" x="830" y="41">B 54</text>
<rect class="bd" x="664" y="55" width="13" height="8"/><text class="mb" x="671" y="61">K 19</text>
<rect class="bd" x="480" y="65" width="13" height="8"/><text class="mb" x="486" y="71">K 12</text>
<rect class="bd" x="107" y="80" width="15" height="8"/><text class="mb" x="114" y="86">L 511</text>
<rect class="bd" x="60" y="90" width="17" height="8"/><text class="mb" x="69" y="96">B 235</text>
<rect class="bd" x="960" y="75" width="15" height="8"/><text class="mb" x="967" y="81">L 821</text>
<rect class="bd" x="218" y="128" width="14" height="8"/><text class="mb" x="225" y="134">K 14</text>
<rect class="bd" x="898" y="140" width="15" height="8"/><text class="mb" x="905" y="146">L 654</text>
<rect class="bd" x="955" y="147" width="20" height="8"/><text class="mb" x="965" y="153">L 821n</text>
<rect class="bd" x="371" y="164" width="13" height="8"/><text class="mb" x="377" y="170">K 34</text>
<rect class="bd" x="278" y="154" width="16" height="8"/><text class="mb" x="286" y="160">L 645</text>
<rect class="bd" x="615" y="159" width="18" height="16"/><text class="mb" x="624" y="165">B 54</text><text class="mb" x="624" y="172">B 236</text>
<rect class="bd" x="492" y="179" width="16" height="8"/><text class="mb" x="500" y="185">L 654</text>
<rect class="bd" x="694" y="193" width="16" height="8"/><text class="mb" x="702" y="199">L 684</text>
<rect class="bd" x="747" y="198" width="16" height="8"/><text class="mb" x="755" y="204">L 556</text>
<rect class="bd" x="912" y="205" width="16" height="8"/><text class="mb" x="920" y="211">L 821</text>
<rect class="bd" x="571" y="215" width="18" height="16"/><text class="mb" x="580" y="221">B 54</text><text class="mb" x="580" y="228">B 236</text>
<rect class="bd" x="298" y="222" width="16" height="8"/><text class="mb" x="306" y="228">L 609</text>
<rect class="bd" x="454" y="233" width="16" height="8"/><text class="mb" x="462" y="239">L 511</text>
<rect class="bd" x="948" y="236" width="14" height="8"/><text class="mb" x="955" y="242">K 14</text>
<rect class="bd" x="124" y="247" width="16" height="8"/><text class="mb" x="132" y="253">L 658</text>
<rect class="bd" x="864" y="263" width="14" height="8"/><text class="mb" x="871" y="269">K 15</text>
<rect class="bd" x="486" y="289" width="13" height="8" style="fill:#ea9cab"/><text class="mb" x="492" y="295" style="fill:#333">A 2</text>
<rect class="bd" x="728" y="288" width="13" height="8" style="fill:#ea9cab"/><text class="mb" x="734" y="294" style="fill:#333">A 2</text>
</g>
<rect x="5" y="7" width="15" height="25" rx="2" fill="#fff" fill-opacity=".9" stroke="#bbb" stroke-width=".5"/>
<path d="M10 13h5M12.500 10.500v5M10 27h5" stroke="#333" stroke-width="1.100"/>
<rect x="1022" y="7" width="12" height="12" rx="1" fill="#fff"/><path d="M1025 16l6-6M1028 10h3v3M1025 13v3h3" stroke="#333" stroke-width=".8" fill="none"/>
<rect x="8" y="274" width="44" height="19" fill="#fff" fill-opacity=".75" stroke="#999" stroke-width=".5"/>
<text x="20" y="285" font-size="6" fill="#333" font-family="Liberation Sans">1000 m</text>
<rect x="923" y="285" width="113" height="14" fill="#fff" fill-opacity=".8"/>
<text x="926" y="294" font-size="6.800" fill="#444" font-family="Liberation Sans">© OpenStreetMap contributors. Plugin</text>
<path d="M500 158 C496 150 491 147 491 142 a9.500 9.500 0 0 1 19 0 C510 147 504 150 500 158Z" fill="#111" stroke="#fff" stroke-width=".7"/>
<circle cx="500.500" cy="142" r="7" fill="#fff"/>
<path d="M495 140h11v1h-1v6h-9v-6h-1zM497 136l3.500 2.500 3.500-2.500v3h-7z" fill="#111"/>
<path d="M498 142v4M500.500 142v4M503 142v4" stroke="#fff" stroke-width=".8"/>
<rect x="0" y="0" width="1036" height="1" fill="#999"/>
</svg>

<!-- footer -->
<div class="a" style="left:0;top:1792px;width:1036px;height:744px;background:#3a3a3a"></div>

<div class="card" style="left:225px;width:185px"></div>
<div class="card" style="left:427px;width:186px"></div>
<div class="card" style="left:631px;width:184px"></div>

<div class="t ct" style="left:247px;top:1842px">VIRoccX</div>
<div class="t ct" style="left:247px;top:1855px">Hygieneschutz</div>
<div class="j p" style="left:247px;top:1882px;width:141px">Zum Thema Hygieneschutz</div>
<div class="j p" style="left:247px;top:1899px;width:141px">haben wir für Sie eine separate</div>
<div class="j p" style="left:247px;top:1916px;width:141px">Website aufgebaut, mit</div>
<div class="j p" style="left:247px;top:1932px;width:141px">interessanten Informationen und</div>
<div class="j p" style="left:247px;top:1949px;width:141px">Angeboten. Hier finden Sie</div>
<div class="j p" style="left:247px;top:1966px;width:141px">unter anderem Möbel, statische</div>
<div class="j p" style="left:247px;top:1982px;width:141px">oder mobile Schutzscheiben</div>
<div class="j p" style="left:247px;top:1999px;width:141px">sowie Trennwände und zudem</div>
<div class="t p" style="left:247px;top:2016px">auch antibakterielle Möbel.</div>
<div class="btn" style="left:276px;top:2049px;width:83px;height:21px;line-height:19px">Zur Website</div>

<div class="t ct" style="left:450px;top:1842px">Saal- und</div>
<div class="t ct" style="left:450px;top:1855px">Hallenbestuhlung</div>
<div class="j p" style="left:450px;top:1882px;width:141px">Auch im Bereich</div>
<div class="j p" style="left:450px;top:1899px;width:141px">Großraumbestuhlung in Hallen</div>
<div class="j p" style="left:450px;top:1916px;width:141px">und/oder Sälen sind wir Ihr</div>
<div class="j p" style="left:450px;top:1932px;width:141px">fachkompetenter und</div>
<div class="j p" style="left:450px;top:1949px;width:141px">professioneller Ansprechpartner.</div>
<div class="j p" style="left:450px;top:1966px;width:141px">Hierbei gehören sowohl lose</div>
<div class="j p" style="left:450px;top:1982px;width:141px">Bestuhlung als auch Sessel und</div>
<div class="j p" style="left:450px;top:1999px;width:141px">Traversen für Kinos oder</div>
<div class="t p" style="left:450px;top:2016px">Hörsäle zu unseren Stärken.</div>
<div class="btn" style="left:479px;top:2049px;width:83px;height:21px;line-height:19px">Zur Website</div>

<div class="t ct" style="left:652px;top:1842px">Stuhlreinigung</div>
<div class="j p" style="left:652px;top:1870px;width:141px">Ob Bürodrehstuhl,</div>
<div class="j p" style="left:652px;top:1886px;width:141px">Besucherstuhl, Stühle aus</div>
<div class="j p" style="left:652px;top:1903px;width:141px">Wohnzimmern oder der</div>
<div class="j p" style="left:652px;top:1920px;width:141px">klassische Hallenstuhl, wir</div>
<div class="j p" style="left:652px;top:1936px;width:141px">kümmern uns gerne um die</div>
<div class="j p" style="left:652px;top:1953px;width:141px">Polster Ihrer Stühle und haben</div>
<div class="j p" style="left:652px;top:1970px;width:141px">hierfür einige Informationen auf</div>
<div class="j p" style="left:652px;top:1987px;width:141px">eine separaten Website für Sie</div>
<div class="t p" style="left:652px;top:2003px">vorbereitet.</div>
<div class="btn" style="left:682px;top:2049px;width:83px;height:21px;line-height:19px">Zur Website</div>

<!-- footer logo -->
<div class="a" style="left:225px;top:2150px;width:266px;height:90px;background:#fff"></div>
<svg class="a" style="left:234px;top:2158px" width="249" height="74" viewBox="0 0 263 78" preserveAspectRatio="none">
<rect x="0" y="0" width="83" height="44" rx="11" fill="#ab9a68"/><rect x="12" y="7" width="59" height="30" rx="6" fill="#fff"/>
<path d="M102 0H173V7H114c-7 0-11 3-11 7v16c0 4 4 7 11 7H173V44H102c-7 0-11-4-11-10V10c0-6 4-10 11-10z" fill="#ab9a68"/>
<path d="M193 0H263V7H205c-7 0-11 3-11 7v16c0 4 4 7 11 7H263V44H193c-7 0-11-4-11-10V10c0-6 4-10 11-10z" fill="#ab9a68"/>
<text x="0" y="58" font-size="10" fill="#777" textLength="263" font-family="Liberation Sans">Office Competence Center</text>
<rect x="0" y="66" width="263" height="11" fill="#777"/>
<text x="1" y="75" font-size="9.500" fill="#eee" textLength="261" font-family="Liberation Sans">Beraten – Planen – Einrichten</text>
</svg>

<div class="j w" style="left:225px;top:2268px;width:266px">Besser planen, gezielter beraten, durchdachter einrichten.</div>
<div class="j w" style="left:225px;top:2284px;width:266px">Das Office Competence Center bietet Ihnen bei der</div>
<div class="j w" style="left:225px;top:2301px;width:266px">Realisierung Ihres neuen Büros oder Objekts in jeder Phase</div>
<div class="j w" style="left:225px;top:2318px;width:266px">perfekte Lösungen. Unser wichtigster Rohstoff für ein</div>
<div class="j w" style="left:225px;top:2335px;width:266px">gelungenes Arbeitsumfeld ist fundiertes Wissen – vom</div>
<div class="j w" style="left:225px;top:2352px;width:266px">ersten Planungsentwurf über den Innenausbau bis zur</div>
<div class="t w" style="left:225px;top:2368px">Akustik-, Licht- und Ergonomieberatung.</div>
<div class="t" style="left:225px;top:2398px;font-size:12px;color:#eee">Wir in den Sozialen Medien</div>
<svg class="a" style="left:235px;top:2425px" width="18" height="18" viewBox="0 0 24 24"><rect x="2" y="2" width="20" height="20" rx="5" fill="none" stroke="#fff" stroke-width="2.200"/><circle cx="12" cy="12" r="4.500" fill="none" stroke="#fff" stroke-width="2.200"/><circle cx="18" cy="6" r="1.300" fill="#fff"/></svg>
<svg class="a" style="left:279px;top:2427px" width="10" height="18" viewBox="0 0 10 22"><path d="M3 22V12H0V8h3V5c0-3 2-5 4.500-5H10v4H8C7 4 7 5 7 6v2h3l-.5 4H7v10z" fill="#fff"/></svg>

<div class="t fh" style="left:536px;top:2148px">LÖSUNGEN</div><div class="ln" style="left:536px;top:2171px;width:132px"></div>
<div class="t fl" style="left:536px;top:2179px">Büroplanung</div>
<div class="t fl" style="left:536px;top:2194px">Büroeinrichtung</div>
<div class="t fl" style="left:536px;top:2209px">Saalbestuhlung</div>
<div class="t fl" style="left:536px;top:2224px">Stuhlrenovierung</div>
<div class="t fh" style="left:684px;top:2148px">KOMPETENZEN</div><div class="ln" style="left:684px;top:2171px;width:132px"></div>
<div class="t fl" style="left:684px;top:2179px">Akustik</div>
<div class="t fl" style="left:684px;top:2194px">Lichtberatung</div>
<div class="t fl" style="left:684px;top:2209px">Ergonomie</div>
<div class="t fl" style="left:684px;top:2224px">OCC Ergonomie Beratung</div>
<div class="t fl" style="left:684px;top:2239px">Nachhaltigkeit &amp; Umweltschutz</div>
<div class="t fl" style="left:684px;top:2254px">OCC Lab</div>
<div class="t fh" style="left:536px;top:2281px">SERVICES</div><div class="ln" style="left:536px;top:2304px;width:132px"></div>
<div class="t fl" style="left:536px;top:2311px">OCC Shop</div>
<div class="t" style="left:536px;top:2336px;font-size:12px;color:#eee">Teilen Sie die Webseite in den Sozialen Medien!</div>

<div class="s" style="left:544px;top:2372px;background:#3b5998"><svg width="14" height="19" viewBox="0 0 14 22" style="left:5px"><path d="M4 22V12H1V8h3V5c0-3 2-5 4.500-5H11v4H9C8 4 8 5 8 6v2h3l-.5 4H8v10z" fill="#fff"/></svg><span>teilen</span></div>
<div class="s" style="left:634px;top:2372px;background:#1a6da8"><svg width="17" height="17" viewBox="0 0 24 24"><path d="M23 5c-1 .5-2 .7-3 .8 1-.6 2-1.700 2.300-2.800-1 .6-2 1-3.200 1.200A5 5 0 0 0 10.500 9C7 9 3.800 7.300 1.700 4.500c-1 1.800-.6 4.500 1.500 6-.8 0-1.500-.2-2-.5 0 2.300 1.600 4.300 3.900 4.800-.7.2-1.400.2-2.100.1.600 2 2.400 3.300 4.600 3.400C5.800 19.500 3.200 20.300.5 20c2.300 1.400 4.800 2 7.500 2 9 0 14-7.500 13.700-14.300 1-.7 1.700-1.600 2.300-2.700z" fill="#fff"/></svg><span>twittern</span></div>
<div class="s" style="left:724px;top:2372px;background:#b53400"><svg width="17" height="17" viewBox="0 0 24 24"><ellipse cx="12" cy="15" rx="10" ry="7.500" fill="#fff"/><circle cx="8" cy="14" r="1.800" fill="#b53400"/><circle cx="16" cy="14" r="1.800" fill="#b53400"/><circle cx="3" cy="11" r="2.500" fill="#fff"/><circle cx="21" cy="11" r="2.500" fill="#fff"/><path d="M12 8l1.500-6 5 1" stroke="#fff" fill="none" stroke-width="1.300"/><circle cx="19" cy="3" r="1.800" fill="#fff"/></svg><span>teilen</span></div>
<div class="s" style="left:544px;top:2402px;background:#35465c"><svg width="14" height="19" viewBox="0 0 14 22" style="left:5px"><path d="M4 0h4v5h5v4H8v7c0 2 2 2 5 1v4c-5 2-10 0-10-4V9H0V6c2-1 4-3 4-6z" fill="#fff"/></svg><span>teilen</span></div>
<div class="s" style="left:634px;top:2402px;background:#126567"><svg width="14" height="19" viewBox="0 0 14 22" style="left:5px"><path d="M9 0h4L7 11l4 8H7L3 11zM2 5h3l2 4-3 5H1l3-5z" fill="#fff"/></svg><span>teilen</span></div>
<div class="s" style="left:724px;top:2402px;background:#0b5f95"><svg width="15" height="17" viewBox="0 0 20 22"><path d="M1 7h4v14H1zM3 1a2.200 2.200 0 1 1 0 4.500A2.200 2.200 0 0 1 3 1zM8 7h4v2c1-1.500 2.500-2.300 4-2.300 3 0 4 2 4 5V21h-4v-8c0-1.500-.5-2.500-2-2.500S12 11.500 12 13v8H8z" fill="#fff"/></svg><span>mitteilen</span></div>
<div class="s" style="left:634px;top:2432px;background:#595959"><svg width="17" height="17" viewBox="0 0 24 24"><path d="M1 4h22v3L12 14 1 7zM1 9l11 7 11-7v11H1z" fill="#fff"/></svg><span>E-Mail</span></div>

<div class="a" style="left:226px;top:2480px;width:590px;height:2px;background:#474747"></div>
<div class="t" style="left:333px;top:2501px;font-size:10.400px;color:#eee">Impressum</div>
<div class="t" style="left:396px;top:2501px;font-size:10.400px;color:#eee">Datenschutzerklärung</div>
<div class="t" style="left:509px;top:2501px;font-size:10.400px;color:#eee">Datenschutz in Sozialen Medien</div>
<div class="t" style="left:670px;top:2501px;font-size:10.400px;color:#eee">Sitemap</div>

<div class="a" style="left:0;top:2536px;width:1036px;height:24px;background:#0d0d0d"></div>
<div class="t" style="left:8px;top:2541px;font-size:7.700px;color:#ddd">© 2022 OCC – Office Competence Center GmbH | Alle Rechte vorbehalten.</div>
<div class="t" style="right:4px;top:2541px;font-size:7.700px;color:#ddd">Webdesign by seoBOXX Webdesign Selm | Andreas Soraru | Alle Rechte vorbehalten.</div>

<div class="a" style="left:1019px;top:1046px;width:17px;height:1450px;background:repeating-linear-gradient(to bottom,rgba(0,0,0,.42) 0,rgba(0,0,0,.42) 2px,transparent 2px,transparent 43.800px)"></div>
</body></html>
